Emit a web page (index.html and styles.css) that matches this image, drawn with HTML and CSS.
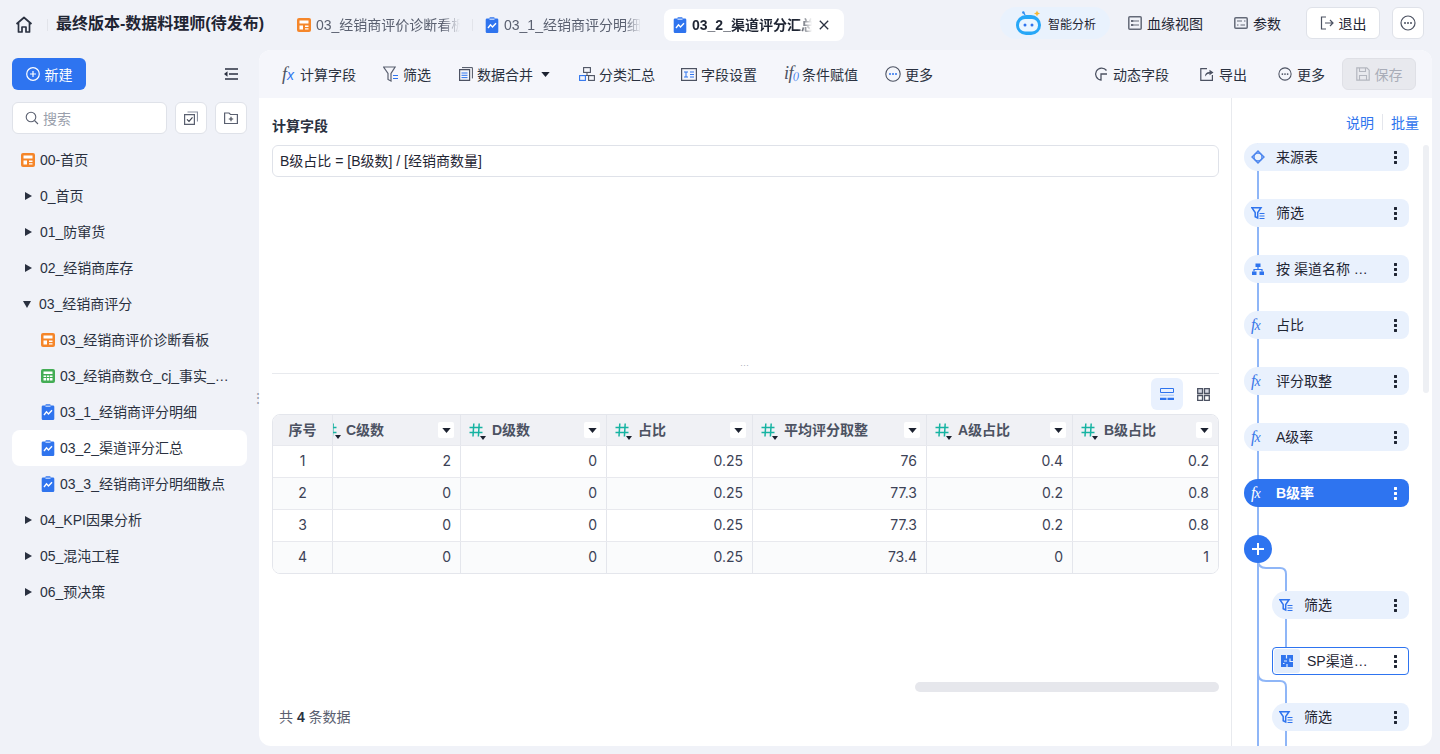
FILE: index.html
```html
<!DOCTYPE html>
<html lang="zh">
<head>
<meta charset="utf-8">
<title>最终版本-数据料理师(待发布)</title>
<link rel="stylesheet" href="styles.css">
</head>
<body>
<svg class="defs" width="0" height="0">
  <defs>
    <symbol id="i-board" viewBox="0 0 14 14"><rect width="14" height="14" rx="2" fill="#f5862a"/><path d="M2.500 2.500h9v3h-9zM2.500 7.500h3.500v4h-3.500zM8 7.500h3.500v1.500H8zM8 10.300h3.500v1.200H8z" fill="#fff"/></symbol>
    <symbol id="i-sheet" viewBox="0 0 14 14"><rect width="14" height="14" rx="2" fill="#43ad55"/><path d="M2.500 2.500h9v2.500h-9zM2.500 6.500h2.500v1.500h-2.500zM5.800 6.500h2.500v1.500h-2.500zM9 6.500h2.500v1.500H9zM2.500 9h2.500v2.500h-2.500zM5.800 9h2.500v2.500h-2.500zM9 9h2.500v2.500H9z" fill="#fff"/></symbol>
    <symbol id="i-chart" viewBox="0 0 14 16"><path d="M2 1.500h2.500V.8Q4.500.3 5 .3h4q.5 0 .5.5v.7H12q1.300 0 1.300 1.300v11.900q0 1.300-1.300 1.300H2q-1.300 0-1.300-1.300V2.800Q.7 1.500 2 1.500z" fill="#2f74ee"/><path d="M4.500 2.200h5" stroke="#cfe0ff" stroke-width="1.200"/><path d="M3 11l2.500-3.200 2 2.100 3.500-3.700" fill="none" stroke="#fff" stroke-width="1.400"/></symbol>
    <symbol id="i-more" viewBox="0 0 16 16"><circle cx="8" cy="8" r="7" fill="none" stroke="#4c5262" stroke-width="1.200"/><circle cx="5" cy="8" r="1" fill="#4c5262"/><circle cx="8" cy="8" r="1" fill="#4c5262"/><circle cx="11" cy="8" r="1" fill="#4c5262"/></symbol>
    <symbol id="i-more-b" viewBox="0 0 16 16"><circle cx="8" cy="8" r="7.200" fill="none" stroke="#4c5262" stroke-width="1.100"/><circle cx="5" cy="8" r="1" fill="#2f74ee"/><circle cx="8" cy="8" r="1" fill="#2f74ee"/><circle cx="11" cy="8" r="1" fill="#2f74ee"/></symbol>
    <symbol id="i-funnel" viewBox="0 0 16 16"><path d="M.6 1h11.500L8 7.500V15L5 13.500v-6z" fill="none" stroke="#5a6070" stroke-width="1.200"/><path d="M10 9.500h5M10 12.500h5" stroke="#2f74ee" stroke-width="1.200"/></symbol>
    <symbol id="i-funnel-s" viewBox="0 0 14 14"><path d="M1 1.800h9L6.700 6.500V12L4.200 10.800V6.500z" fill="#e9f1fd" stroke="#2f74ee" stroke-width="1.500"/><path d="M8.500 7.500h5M8.500 10h5M8.500 12.500h5" stroke="#2f74ee" stroke-width="1"/></symbol>
    <symbol id="i-hash" viewBox="0 0 14 14"><path d="M.5 4.500h13M.5 9.500h13M4.800 .5L4 13.500M10.200 .5L9.400 13.500" fill="none" stroke="#16b3a2" stroke-width="1.500"/></symbol>
    <symbol id="i-caret" viewBox="0 0 10 6"><path d="M0 0h10L5 6z" fill="#1c2230"/></symbol>
  </defs>
</svg>

<div class="app">
  <header class="topbar">
    <svg class="home" width="18" height="18" viewBox="0 0 18 18"><path d="M1.500 8L9 1.500 16.500 8M3.500 6.500V16h3.500v-5h4v5h3.500V6.500" fill="none" stroke="#2a3140" stroke-width="1.700" stroke-linejoin="round"/></svg>
    <span class="vsep home-sep"></span>
    <h1 class="title">最终版本-数据料理师(待发布)</h1>
    <nav class="tabs">
      <div class="tab tab-first"><svg class="ic14"><use href="#i-board"/></svg><span class="tab-text tab-text-a">03_经销商评价诊断看板</span></div>
      <span class="vsep"></span>
      <div class="tab tab-second"><svg class="ic-chart"><use href="#i-chart"/></svg><span class="tab-text tab-text-b">03_1_经销商评分明细</span></div>
      <div class="tab tab-active"><svg class="ic-chart"><use href="#i-chart"/></svg><span class="tab-text tab-text-c">03_2_渠道评分汇总</span>
        <svg class="tab-x" width="10" height="10" viewBox="0 0 10 10"><path d="M.8.800l8.400 8.400M9.200.800L.8 9.200" stroke="#2a3140" stroke-width="1.300"/></svg></div>
    </nav>
    <div class="top-right">
      <div class="ai-pill">
        <svg width="26" height="26" viewBox="0 0 26 26"><path d="M9 5L7.500 2.500" stroke="#2f8cf2" stroke-width="1.400"/><circle cx="7.300" cy="2.500" r="1.200" fill="#2f8cf2"/><path d="M21 .5l.9 2.100 2.100.9-2.100.9-.9 2.100-.9-2.100-2.100-.9 2.100-.9z" fill="#f7b733"/><rect x="0" y="5" width="25" height="20" rx="10" fill="#27a7f7"/><rect x="3" y="9" width="19" height="12.500" rx="6" fill="#eaf6ff"/><circle cx="9" cy="15" r="1.500" fill="#2f74ee"/><circle cx="16" cy="15" r="1.500" fill="#2f74ee"/></svg>
        <span class="ai-text">智能分析</span>
      </div>
      <div class="top-link link-lineage"><svg width="14" height="14" viewBox="0 0 14 14"><rect x=".8" y=".8" width="12.400" height="12.400" rx="1" fill="none" stroke="#646a78" stroke-width="1.500"/><path d="M3 4h2.500v2H3zM3 8h2.500v2H3z" fill="#646a78"/><path d="M5.500 5H11M5.500 9H11" stroke="#646a78" stroke-width="1.100"/></svg><span>血缘视图</span></div>
      <div class="top-link link-param"><svg width="14" height="14" viewBox="0 0 14 14"><rect x=".8" y="1.800" width="12.400" height="10.400" rx="1" fill="none" stroke="#646a78" stroke-width="1.500"/><path d="M3 5h5M10 5h1.500M3 9h1.500M6.500 9H11" stroke="#646a78" stroke-width="1.100"/></svg><span>参数</span></div>
      <button class="btn-white btn-exit"><svg width="14" height="14" viewBox="0 0 14 14"><path d="M6 1H1.500v12H6M5 7h8M10 4l3 3-3 3" fill="none" stroke="#4c5262" stroke-width="1.200"/></svg><span>退出</span></button>
      <button class="btn-white btn-dots"><svg width="16" height="16"><use href="#i-more"/></svg></button>
    </div>
  </header>

  <div class="body">
    <aside class="sidebar">
      <div class="side-top">
        <button class="btn-new"><svg width="14" height="14" viewBox="0 0 14 14"><circle cx="7" cy="7" r="6.300" fill="none" stroke="#fff" stroke-width="1.200"/><path d="M7 4v6M4 7h6" stroke="#fff" stroke-width="1.200"/></svg><span>新建</span></button>
        <svg class="collapse" width="14" height="12" viewBox="0 0 14 12"><path d="M1 1h13M5 6h9M1 11h13" stroke="#2a3140" stroke-width="1.500"/><path d="M0 6l3.500-2.700v5.400z" fill="#2a3140"/></svg>
      </div>
      <div class="side-search">
        <div class="search"><svg width="14" height="14" viewBox="0 0 14 14"><circle cx="6" cy="6" r="4.800" fill="none" stroke="#5a6070" stroke-width="1.100"/><path d="M9.500 9.500L13 13" stroke="#5a6070" stroke-width="1.100"/></svg><span>搜索</span></div>
        <button class="btn-square"><svg width="14" height="14" viewBox="0 0 14 14"><path d="M.6 3.600h9.800v9.800H.6z" fill="none" stroke="#5a6070" stroke-width="1.200"/><path d="M3.500 1h10v9.500" fill="none" stroke="#8a90a0" stroke-width="1.200"/><path d="M3 8.300l2 2 3.500-4" fill="none" stroke="#3c4250" stroke-width="1.200"/></svg></button>
        <button class="btn-square"><svg width="14" height="12" viewBox="0 0 14 12"><path d="M.6 1h4.400l1.500 1.500h6.900v9H.6z" fill="none" stroke="#5a6070" stroke-width="1.200"/><path d="M7 4.800v4.400M4.800 7h4.400" stroke="#3c4250" stroke-width="1.100"/></svg></button>
      </div>
      <ul class="tree">
        <li class="row"><svg class="ic14 lead"><use href="#i-board"/></svg><span>00-首页</span></li>
        <li class="row folder"><i class="arrow"></i><span>0_首页</span></li>
        <li class="row folder"><i class="arrow"></i><span>01_防窜货</span></li>
        <li class="row folder"><i class="arrow"></i><span>02_经销商库存</span></li>
        <li class="row folder"><i class="arrow arrow-down"></i><span>03_经销商评分</span></li>
        <li class="row child"><svg class="ic14"><use href="#i-board"/></svg><span>03_经销商评价诊断看板</span></li>
        <li class="row child"><svg class="ic14"><use href="#i-sheet"/></svg><span>03_经销商数仓_cj_事实_…</span></li>
        <li class="row child"><svg class="ic-chart"><use href="#i-chart"/></svg><span>03_1_经销商评分明细</span></li>
        <li class="row child selected"><svg class="ic-chart"><use href="#i-chart"/></svg><span>03_2_渠道评分汇总</span></li>
        <li class="row child"><svg class="ic-chart"><use href="#i-chart"/></svg><span>03_3_经销商评分明细散点</span></li>
        <li class="row folder"><i class="arrow"></i><span>04_KPI因果分析</span></li>
        <li class="row folder"><i class="arrow"></i><span>05_混沌工程</span></li>
        <li class="row folder"><i class="arrow"></i><span>06_预决策</span></li>
      </ul>
      <span class="side-grip">⋮</span>
    </aside>

    <main class="card">
      <div class="toolbar">
        <div class="tool t-calc"><span class="fx">f<b>x</b></span><span>计算字段</span></div>
        <div class="tool t-filter"><svg width="16" height="16"><use href="#i-funnel"/></svg><span>筛选</span></div>
        <div class="tool t-merge"><svg width="14" height="14" viewBox="0 0 14 14"><path d="M.6 2.600h10v10.800H.6z" fill="none" stroke="#4c5262" stroke-width="1.200"/><path d="M3 .6h10.400v10.800" fill="none" stroke="#4c5262" stroke-width="1"/><path d="M2.500 6h6M2.500 8.300h6M2.500 10.600h6" stroke="#2f74ee" stroke-width="1"/></svg><span>数据合并</span><svg class="caret" width="9" height="5"><use href="#i-caret"/></svg></div>
        <div class="tool t-group"><svg width="16" height="14" viewBox="0 0 16 14"><rect x="4.600" y=".6" width="6.800" height="4.800" fill="none" stroke="#4c5262" stroke-width="1.100"/><path d="M8 5.500v3M3 8.500h10" stroke="#4c5262" stroke-width="1"/><rect x=".6" y="8.600" width="5.800" height="4.800" fill="none" stroke="#2f74ee" stroke-width="1.100"/><rect x="9.600" y="8.600" width="5.800" height="4.800" fill="none" stroke="#4c5262" stroke-width="1.100"/></svg><span>分类汇总</span></div>
        <div class="tool t-field"><svg width="16" height="13" viewBox="0 0 16 13"><rect x=".6" y=".6" width="14.800" height="11.800" fill="none" stroke="#4c5262" stroke-width="1.200"/><path d="M3 4h4M5 4v5M3 9h4M9 4h4M9 6.500h4M9 9h4" stroke="#2f74ee" stroke-width="1"/></svg><span>字段设置</span></div>
        <div class="tool t-cond"><span class="fx-if">if<b>()</b></span><span>条件赋值</span></div>
        <div class="tool t-more"><svg width="16" height="16"><use href="#i-more-b"/></svg><span>更多</span></div>
        <div class="tool-spacer"></div>
        <div class="tool t-dyn"><svg width="14" height="14" viewBox="0 0 14 14"><path d="M12.500 3.500A6 6 0 1 0 7 13V7h6" fill="none" stroke="#4c5262" stroke-width="1.300"/></svg><span>动态字段</span></div>
        <div class="tool t-export"><svg width="14" height="14" viewBox="0 0 14 14"><path d="M7 1.600H.8v11.800h11.600V8" fill="none" stroke="#4c5262" stroke-width="1.200"/><path d="M5 9.500q0-4.500 4.500-4.500V2.700L13.500 5.500 9.500 8.300V6.500Q7 6.500 5 9.500z" fill="#4c5262"/></svg><span>导出</span></div>
        <div class="tool t-more2"><svg width="14" height="14"><use href="#i-more"/></svg><span>更多</span></div>
        <button class="btn-save"><svg width="14" height="14" viewBox="0 0 14 14"><path d="M.8.800h10l2.400 2.400v10H.8z" fill="none" stroke="#b3b6bf" stroke-width="1.200"/><path d="M3.500 1v3.500h6V1M3.500 13V8.500h7V13" fill="none" stroke="#b3b6bf" stroke-width="1.100"/></svg><span>保存</span></button>
      </div>

      <div class="workspace">
        <section class="editor">
          <div class="formula">
            <div class="label">计算字段</div>
            <div class="formula-input">B级占比 = [B级数] / [经销商数量]</div>
          </div>
          <div class="splitter"><span>···</span></div>
          <div class="view-tools">
            <button class="view-btn view-on"><svg width="14" height="12" viewBox="0 0 14 12"><path d="M.5.500h13v4H.5z" fill="none" stroke="#2f74ee"/><path d="M0 6.500h14v1.500H0z" fill="#b7d0fa"/><path d="M0 9.800h6.500V12H0zM7.500 9.800H14V12H7.500z" fill="#2f74ee"/></svg></button>
            <button class="view-btn"><svg width="13" height="13" viewBox="0 0 13 13"><path d="M.7.700h4.800v4.800H.7zM7.500.700h4.800v4.800H7.500z" fill="#d5d8e2" stroke="#4c5262" stroke-width="1.300"/><path d="M.7 7.500h4.800v4.800H.7zM7.500 7.500h4.800v4.800H7.500z" fill="none" stroke="#4c5262" stroke-width="1.300"/></svg></button>
          </div>
          <div class="table">
            <div class="tr th-row">
              <div class="th th-seq">序号</div>
              <div class="th th-clip"><span class="type-clip"><svg class="ic14"><use href="#i-hash"/></svg></span><span class="th-name">C级数</span><i class="th-menu"><svg width="9" height="5"><use href="#i-caret"/></svg></i></div>
              <div class="th"><span class="type"><svg class="ic14"><use href="#i-hash"/></svg></span><span class="th-name">D级数</span><i class="th-menu"><svg width="9" height="5"><use href="#i-caret"/></svg></i></div>
              <div class="th"><span class="type"><svg class="ic14"><use href="#i-hash"/></svg></span><span class="th-name">占比</span><i class="th-menu"><svg width="9" height="5"><use href="#i-caret"/></svg></i></div>
              <div class="th"><span class="type"><svg class="ic14"><use href="#i-hash"/></svg></span><span class="th-name">平均评分取整</span><i class="th-menu"><svg width="9" height="5"><use href="#i-caret"/></svg></i></div>
              <div class="th"><span class="type"><svg class="ic14"><use href="#i-hash"/></svg></span><span class="th-name">A级占比</span><i class="th-menu"><svg width="9" height="5"><use href="#i-caret"/></svg></i></div>
              <div class="th"><span class="type"><svg class="ic14"><use href="#i-hash"/></svg></span><span class="th-name">B级占比</span><i class="th-menu"><svg width="9" height="5"><use href="#i-caret"/></svg></i></div>
            </div>
            <div class="tr"><div class="td seq">1</div><div class="td">2</div><div class="td">0</div><div class="td">0.25</div><div class="td">76</div><div class="td">0.4</div><div class="td">0.2</div></div>
            <div class="tr alt"><div class="td seq">2</div><div class="td">0</div><div class="td">0</div><div class="td">0.25</div><div class="td">77.3</div><div class="td">0.2</div><div class="td">0.8</div></div>
            <div class="tr"><div class="td seq">3</div><div class="td">0</div><div class="td">0</div><div class="td">0.25</div><div class="td">77.3</div><div class="td">0.2</div><div class="td">0.8</div></div>
            <div class="tr alt"><div class="td seq">4</div><div class="td">0</div><div class="td">0</div><div class="td">0.25</div><div class="td">73.4</div><div class="td">0</div><div class="td">1</div></div>
          </div>
          <div class="hscroll"><span class="hthumb"></span></div>
          <div class="total">共 <b>4</b> 条数据</div>
        </section>

        <aside class="flow">
          <div class="flow-head"><a>说明</a><span class="flow-sep"></span><a>批量</a></div>
          <div class="flow-canvas">
            <svg class="flow-lines" width="176" height="640" viewBox="0 0 176 640"><path d="M14 0V640" fill="none" stroke="#8fb6f7" stroke-width="2"/><path d="M14 417q0 8 8 8h14q6 0 6 6v80M14 530q0 8 8 8h14q6 0 6 6v70" fill="none" stroke="#8fb6f7" stroke-width="2"/></svg>
            <div class="node"><svg class="nic" width="14" height="14" viewBox="0 0 14 14"><path d="M7 1L13 7 7 13 1 7z" fill="none" stroke="#4d86ee" stroke-width="1.400"/><circle cx="7" cy="7" r="4" fill="none" stroke="#4d86ee" stroke-width="1.400"/></svg><span class="ntext">来源表</span><i class="kebab"></i></div>
            <div class="node"><svg class="nic" width="14" height="14"><use href="#i-funnel-s"/></svg><span class="ntext">筛选</span><i class="kebab"></i></div>
            <div class="node"><svg class="nic" width="14" height="14" viewBox="0 0 14 14"><path d="M4.500 1.500h5V5h-5zM1 9.500h4.500V13H1zM8.500 9.500H13V13H8.500z" fill="#2f74ee"/><path d="M7 5v2.500M3 9.500v-2h8v2" fill="none" stroke="#2f74ee" stroke-width="1.200"/></svg><span class="ntext">按 渠道名称 …</span><i class="kebab"></i></div>
            <div class="node"><span class="nfx">f<b>x</b></span><span class="ntext">占比</span><i class="kebab"></i></div>
            <div class="node"><span class="nfx">f<b>x</b></span><span class="ntext">评分取整</span><i class="kebab"></i></div>
            <div class="node"><span class="nfx">f<b>x</b></span><span class="ntext">A级率</span><i class="kebab"></i></div>
            <div class="node node-on"><span class="nfx">f<b>x</b></span><span class="ntext">B级率</span><i class="kebab"></i></div>
            <div class="add"><svg width="14" height="14" viewBox="0 0 14 14"><path d="M7 1v12M1 7h12" stroke="#fff" stroke-width="2"/></svg></div>
            <div class="node sub"><svg class="nic" width="14" height="14"><use href="#i-funnel-s"/></svg><span class="ntext">筛选</span><i class="kebab"></i></div>
            <div class="node sub node-out"><span class="puzzle"><svg width="12" height="12" viewBox="0 0 12 12"><rect width="12" height="12" fill="#2f74ee"/><path d="M5.500 0v3.500M3 6h3M6 9v3M9 3.500v3h3M2 8.500h1.500" stroke="#e6effd" stroke-width="1.200" fill="none"/></svg></span><span class="ntext">SP渠道…</span><i class="kebab"></i></div>
            <div class="node sub"><svg class="nic" width="14" height="14"><use href="#i-funnel-s"/></svg><span class="ntext">筛选</span><i class="kebab"></i></div>
          </div>
          <span class="vthumb"></span>
        </aside>
      </div>
    </main>
  </div>
</div>
</body>
</html>
```
FILE: styles.css
```css
* { box-sizing: border-box; margin: 0; padding: 0; }
html, body { height: 100%; overflow: hidden; }
body {
  background: #f0f2f8;
  color: #1f2533;
  font-family: "Liberation Sans", "Noto Sans CJK SC", sans-serif;
  font-size: 14px;
}
button { font-family: inherit; font-size: 14px; color: inherit; cursor: pointer; }
ul { list-style: none; }
svg { display: block; flex: none; }
.defs { position: absolute; }
.ic14 { width: 14px; height: 14px; }
.ic-chart { width: 14px; height: 16px; }
.app { display: flex; flex-direction: column; height: 754px; }

/* top bar */
.topbar { height: 50px; display: flex; align-items: center; padding: 0 16px 0 15px; flex: none; }
.home { margin-right: 14px; }
.vsep { width: 1px; height: 12px; background: #e2e4ea; flex: none; }
.home-sep { margin-right: 8px; }
.title { font-size: 16px; font-weight: 700; color: #1f2533; white-space: nowrap; width: 241px; line-height: 22px; padding-bottom: 2px; }
.tabs { display: flex; align-items: center; }
.tab { display: flex; align-items: center; gap: 5px; height: 32px; color: #5a6070; white-space: nowrap; }
.tab-first { margin-right: 12px; }
.tab-second { margin: 0 23px 0 12px; }
.tab-text { overflow: hidden; display: block; margin-top: -2px; -webkit-mask-image: linear-gradient(90deg, #000 88%, transparent); mask-image: linear-gradient(90deg, #000 88%, transparent); }
.tab-text-a { width: 144px; }
.tab-text-b { width: 137px; }
.tab-text-c { width: 120px; font-weight: 700; color: #1f2533; }
.tab-active { width: 180px; padding-left: 9px; background: #fff; border-radius: 8px; }
.tab-x { margin-left: 2px; }
.top-right { margin-left: auto; display: flex; align-items: center; margin-bottom: 4px; }
.ai-pill { width: 110px; height: 32px; border-radius: 16px; background: #e9f2fd; display: flex; align-items: center; gap: 6px; padding-left: 16px; margin-right: 18px; }
.ai-text { font-size: 12px; }
.top-link { display: flex; align-items: center; gap: 5px; }
.link-lineage { margin-right: 31px; }
.link-param { margin-right: 25px; }
.btn-white { height: 32px; background: #fff; border: 1px solid #dfe2e9; border-radius: 6px; display: flex; align-items: center; justify-content: center; }
.btn-exit { width: 74px; gap: 5px; margin-right: 12px; }
.btn-dots { width: 32px; }

/* body */
.body { flex: 1; min-height: 0; display: flex; padding: 0 8px 8px 0; }
.sidebar { width: 259px; flex: none; position: relative; padding-top: 8px; }
.side-top { display: flex; align-items: center; justify-content: space-between; padding: 0 21px 0 12px; height: 32px; }
.btn-new { width: 74px; height: 32px; background: #2e74f0; color: #fff; border: 0; border-radius: 6px; display: flex; align-items: center; justify-content: center; gap: 5px; }
.side-search { display: flex; gap: 8px; padding: 0 12px; margin-top: 12px; }
.search { width: 155px; height: 32px; background: #fff; border: 1px solid #dfe2e9; border-radius: 6px; display: flex; align-items: center; gap: 4px; padding-left: 12px; color: #9a9fac; }
.btn-square { width: 32px; height: 32px; background: #fff; border: 1px solid #dfe2e9; border-radius: 6px; display: flex; align-items: center; justify-content: center; }
.tree { margin-top: 8px; }
.row { height: 36px; display: flex; align-items: center; margin: 0 12px; white-space: nowrap; color: #2a3140; }
.row span { margin-top: -2px; }
.lead { margin: 0 5px 0 9px; }
.folder { padding-left: 12px; }
.arrow { width: 0; height: 0; border-left: 7px solid #2a3140; border-top: 4.500px solid transparent; border-bottom: 4.500px solid transparent; margin-right: 8px; margin-left: 1px; }
.arrow-down { border-left: 4.500px solid transparent; border-right: 4.500px solid transparent; border-top: 7px solid #2a3140; border-bottom: 0; margin: 0 8px 0 -1px; }
.child { padding-left: 29px; gap: 5px; }
.selected { background: #fff; border-radius: 8px; }
.side-grip { position: absolute; left: 251px; top: 339px; color: #9a9fac; font-size: 14px; line-height: 18px; }

/* main card */
.card { flex: 1; min-width: 0; background: #fff; border-radius: 12px; overflow: hidden; display: flex; flex-direction: column; }
.toolbar { height: 48px; flex: none; background: #f5f6fb; display: flex; align-items: center; padding: 0 16px 0 23px; color: #2a3140; }
.tool { display: flex; align-items: center; gap: 5px; white-space: nowrap; }
.tool-spacer { flex: 1; }
.t-calc { margin-right: 27px; gap: 5px; }
.t-filter { margin-right: 28px; gap: 4px; }
.t-merge { margin-right: 29px; gap: 4px; }
.caret { margin-left: 4px; }
.t-group { margin-right: 26px; gap: 4px; }
.t-field { margin-right: 27px; gap: 4px; }
.t-cond { margin-right: 27px; gap: 5px; }
.t-more { gap: 4px; }
.t-dyn { margin-right: 31px; }
.t-export { margin-right: 31px; }
.t-more2 { margin-right: 17px; }
.fx, .fx-if, .nfx { font-family: "Liberation Serif", serif; font-style: italic; line-height: 16px; display: block; width: 14px; white-space: nowrap; }
.fx, .fx-if { font-size: 18px; color: #4c5262; }
.fx { margin-right: -1px; }
.fx-if { margin-right: -1px; }
.fx b { font-size: 14px; font-weight: 400; color: #2f74ee; font-family: "Liberation Sans", sans-serif; }
.fx-if b { font-size: 10px; font-weight: 400; color: #2f74ee; }
.fx-if { letter-spacing: -.5px; }
.btn-save { width: 74px; height: 32px; background: #e8e9ee; border: 1px solid #dfe0e6; border-radius: 6px; color: #a9adb8; display: flex; align-items: center; justify-content: center; gap: 5px; }

.workspace { flex: 1; min-height: 0; display: flex; }
.editor { flex: 1; min-width: 0; padding: 0 12px 0 13px; display: flex; flex-direction: column; }
.formula { height: 267px; padding-top: 20px; flex: none; }
.label { font-weight: 700; color: #2a3140; line-height: 17px; }
.formula-input { margin-top: 10px; height: 32px; border: 1px solid #dfe2e9; border-radius: 6px; line-height: 31px; padding-left: 7px; color: #1f2533; }
.splitter { height: 9px; border-bottom: 1px solid #e8eaee; position: relative; flex: none; }
.splitter span { position: absolute; left: 468px; top: -6px; font-size: 9px; color: #a9adb8; line-height: 12px; }
.view-tools { display: flex; justify-content: flex-end; gap: 4px; padding-top: 4px; flex: none; }
.view-btn { width: 32px; height: 32px; border: 0; background: transparent; border-radius: 6px; display: flex; align-items: center; justify-content: center; }
.view-on { background: #e9f1fe; }
.table { margin-top: 4px; border: 1px solid #e4e6ec; border-radius: 8px; overflow: hidden; flex: none; }
.tr { display: grid; grid-template-columns: 59px 128px 146px 146px 174px 146px 1fr; height: 32px; border-top: 1px solid #e8e9ee; }
.th-row { height: 30px; border-top: 0; background: #f0f1f5; }
.alt { background: #fafbfc; }
.th { display: flex; align-items: center; font-weight: 700; color: #4c5262; border-left: 1px solid #e4e6ec; position: relative; padding: 0 6px 0 8px; }
.th-seq { justify-content: center; border-left: 0; padding: 0 0 2px; }
.th-clip { padding-left: 0; }
.type { position: relative; width: 14px; margin-right: 9px; }
.type::after { content: ""; position: absolute; left: 11px; top: 13px; border-left: 3px solid transparent; border-right: 3px solid transparent; border-top: 4px solid #1c2230; }
.type-clip { width: 4px; overflow: hidden; margin-right: 9px; position: relative; display: block; }
.type-clip svg { margin-left: -10px; }
.th-clip::before { content: ""; position: absolute; left: 2px; top: 20px; border-left: 3px solid transparent; border-right: 3px solid transparent; border-top: 4px solid #1c2230; }
.th-name { flex: 1; white-space: nowrap; margin-top: -2px; }
.th-menu { width: 16px; height: 16px; background: #fff; border-radius: 2px; display: flex; align-items: center; justify-content: center; }
.td { text-align: right; line-height: 29px; padding-right: 9px; color: #3c4256; border-left: 1px solid #e4e6ec; font-family: Inter, sans-serif; }
.seq { text-align: center; border-left: 0; padding: 0; }
.hscroll { margin-top: 108px; height: 10px; display: flex; justify-content: flex-end; flex: none; }
.hthumb { width: 304px; height: 10px; border-radius: 5px; background: #e6e7ec; }
.total { margin-top: 16px; padding-left: 7px; color: #5a6070; line-height: 18px; }
.total b { color: #2a3140; }

/* flow */
.flow { width: 201px; flex: none; border-left: 1px solid #e8eaee; position: relative; overflow: hidden; }
.flow-head { height: 45px; display: flex; align-items: center; justify-content: flex-end; padding: 2px 13px 0 0; color: #2f74ee; }
.flow-sep { width: 1px; height: 16px; background: #e4e6ec; margin: 0 8px; }
.flow-canvas { position: relative; padding-left: 12px; width: 177px; display: flex; flex-direction: column; }
.flow-lines { position: absolute; left: 12px; top: 0; }
.node { position: relative; height: 28px; width: 165px; margin-bottom: 28px; background: #e9f1fd; border-radius: 14px 8px 8px 14px; display: flex; align-items: center; padding-left: 7px; color: #1f2533; flex: none; }
.nic { margin-right: 11px; width: 14px; }
.nfx { color: #3a76e8; font-size: 16px; font-weight: 400; margin-right: 11px; letter-spacing: -1px; }
.nfx b { font-size: 14px; font-weight: 400; font-family: "Liberation Serif", serif; }
.ntext { flex: 1; white-space: nowrap; margin-top: -2px; }
.kebab { width: 3px; height: 13px; margin-right: 12px; background: radial-gradient(circle at 1.500px 1.500px, #1f2533 1.400px, transparent 1.600px) 0 0 / 3px 5px repeat-y; }
.node-on { background: #2e74f0; color: #fff; font-weight: 700; }
.node-on .nfx { color: #fff; font-weight: 400; }
.node-on .nfx b { font-weight: 400; }
.node-on .kebab { background-image: radial-gradient(circle at 1.500px 1.500px, #fff 1.400px, transparent 1.600px); }
.add { position: relative; width: 28px; height: 28px; border-radius: 50%; background: #2e74f0; display: flex; align-items: center; justify-content: center; margin-bottom: 28px; flex: none; }
.sub { width: 137px; margin-left: 28px; }
.node-out { background: #fff; border: 1px solid #2e74f0; border-radius: 4px; padding-left: 1px; }
.puzzle { width: 26px; height: 24px; background: #e3edfc; border-radius: 3px; display: flex; align-items: center; justify-content: center; margin-right: 7px; flex: none; }
.node-out .kebab { margin-right: 11px; }
.vthumb { position: absolute; right: 3px; top: 47px; width: 6px; height: 248px; background: #eef0f4; border-radius: 3px; }
```
